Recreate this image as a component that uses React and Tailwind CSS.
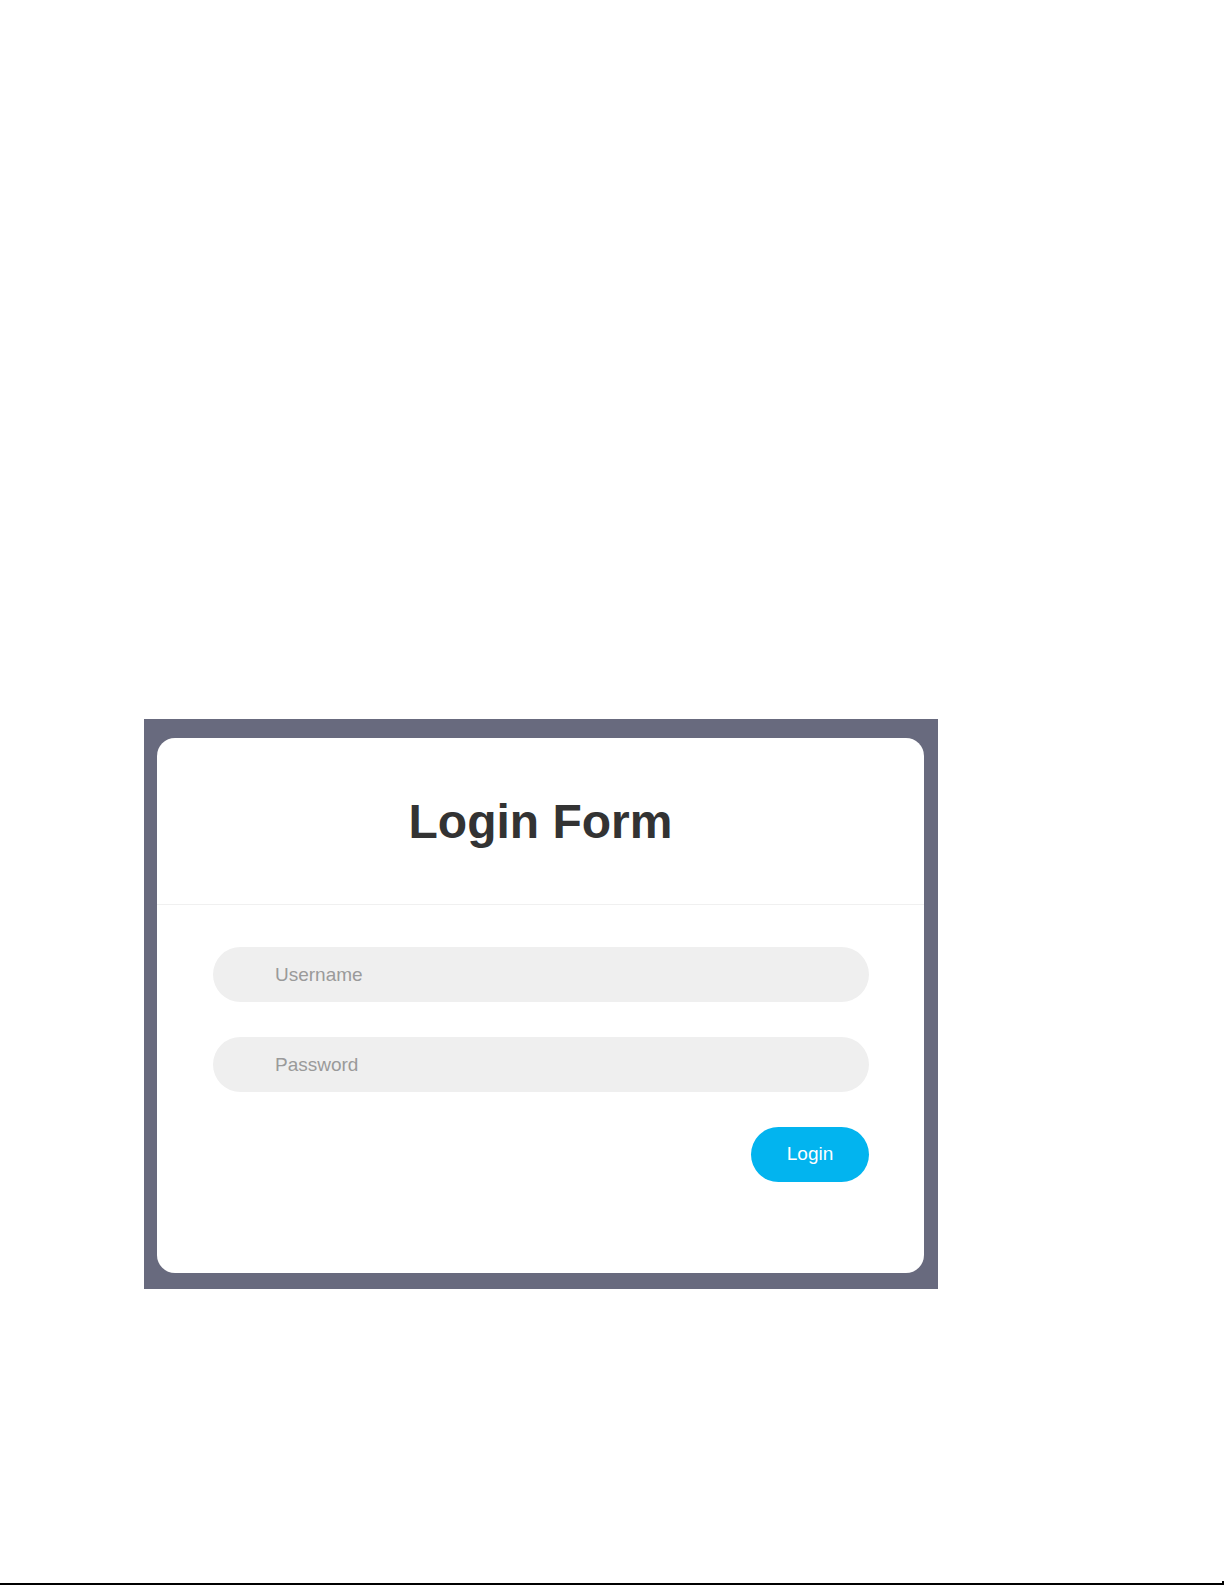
export default function App() {
  return (
    <div className="h-[1585px] flex flex-col bg-white" style={{ fontFamily: '"Liberation Sans", Arial, sans-serif' }}>
      <div className="ml-[144px] mt-[719px] w-[794px] h-[570px] bg-[#686a7e] pt-[19px] pl-[13px] pr-[14px] pb-[16px]">
        <div className="w-full h-full bg-white rounded-[18px] flex flex-col">
          <div className="h-[167px] flex items-center justify-center border-b border-[#f0f0f0]">
            <h1 className="text-[48px] font-bold text-[#333333] leading-none pt-[2px]">Login Form</h1>
          </div>
          <div className="flex flex-col px-[55px] pl-[56px] pt-[42px] gap-[35px]">
            <input
              type="text"
              placeholder="Username"
              className="h-[55px] w-full rounded-full bg-[#efefef] pl-[62px] text-[19px] text-[#555] placeholder:text-[#9a9a9a] outline-none"
            />
            <input
              type="password"
              placeholder="Password"
              className="h-[55px] w-full rounded-full bg-[#efefef] pl-[62px] text-[19px] text-[#555] placeholder:text-[#9a9a9a] outline-none"
            />
            <div className="flex justify-end">
              <button className="w-[118px] h-[55px] rounded-full bg-[#02b4ef] text-white text-[19px]">Login</button>
            </div>
          </div>
        </div>
      </div>
      <div className="mt-auto flex items-end">
        <div className="h-[2px] w-[1222px] bg-black"></div>
        <div className="h-[4px] w-[2px] bg-black"></div>
      </div>
    </div>
  );
}
